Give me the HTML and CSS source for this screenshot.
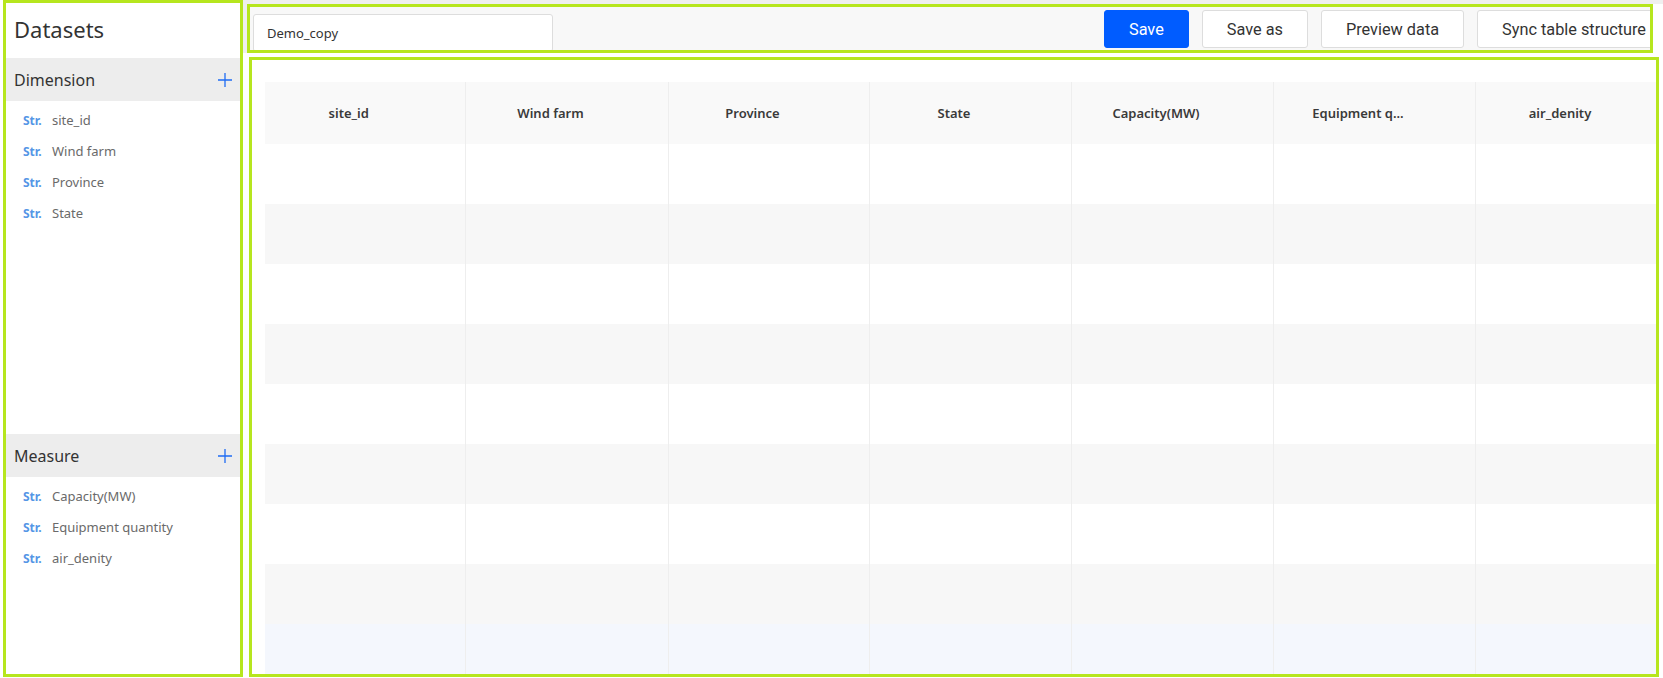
FILE: index.html
```html
<!DOCTYPE html>
<html lang="en">
<head>
<meta charset="utf-8">
<title>Datasets</title>
<link rel="stylesheet" href="styles.css">
</head>
<body>
<div class="app">
  <aside class="sidebar">
    <h1 class="title">Datasets</h1>
    <section class="group group-dim">
      <div class="group-head">
        <span>Dimension</span>
        <svg class="plus" width="14" height="14" viewBox="0 0 14 14"><path d="M7 0V14M0 7H14" stroke="#1f6cf3" stroke-width="1.3" fill="none"/></svg>
      </div>
      <ul class="fields">
        <li><span class="type">Str.</span>site_id</li>
        <li><span class="type">Str.</span>Wind farm</li>
        <li><span class="type">Str.</span>Province</li>
        <li><span class="type">Str.</span>State</li>
      </ul>
    </section>
    <section class="group">
      <div class="group-head">
        <span>Measure</span>
        <svg class="plus" width="14" height="14" viewBox="0 0 14 14"><path d="M7 0V14M0 7H14" stroke="#1f6cf3" stroke-width="1.3" fill="none"/></svg>
      </div>
      <ul class="fields">
        <li><span class="type">Str.</span>Capacity(MW)</li>
        <li><span class="type">Str.</span>Equipment quantity</li>
        <li><span class="type">Str.</span>air_denity</li>
      </ul>
    </section>
  </aside>
  <main class="main">
    <div class="topbar">
      <div class="toolbar">
        <input class="name-input" type="text" value="Demo_copy">
        <div class="actions">
          <button class="btn btn-primary">Save</button>
          <button class="btn">Save as</button>
          <button class="btn">Preview data</button>
          <button class="btn">Sync table structure</button>
        </div>
      </div>
    </div>
    <div class="grid-panel">
      <table class="grid">
        <colgroup>
          <col class="c1"><col class="c2"><col class="c3"><col class="c4"><col class="c5"><col class="c6"><col class="c7">
        </colgroup>
        <thead>
          <tr>
            <th>site_id</th><th>Wind farm</th><th>Province</th><th>State</th><th>Capacity(MW)</th><th>Equipment q...</th><th>air_denity</th>
          </tr>
        </thead>
        <tbody>
          <tr><td></td><td></td><td></td><td></td><td></td><td></td><td></td></tr>
          <tr><td></td><td></td><td></td><td></td><td></td><td></td><td></td></tr>
          <tr><td></td><td></td><td></td><td></td><td></td><td></td><td></td></tr>
          <tr><td></td><td></td><td></td><td></td><td></td><td></td><td></td></tr>
          <tr><td></td><td></td><td></td><td></td><td></td><td></td><td></td></tr>
          <tr><td></td><td></td><td></td><td></td><td></td><td></td><td></td></tr>
          <tr><td></td><td></td><td></td><td></td><td></td><td></td><td></td></tr>
          <tr><td></td><td></td><td></td><td></td><td></td><td></td><td></td></tr>
          <tr class="hover"><td></td><td></td><td></td><td></td><td></td><td></td><td></td></tr>
        </tbody>
      </table>
    </div>
  </main>
</div>
</body>
</html>
```

FILE: styles.css
```css
* { box-sizing: border-box; }
html, body { margin: 0; padding: 0; background: #ffffff; }
body { font-family: "Noto Sans", "Open Sans", sans-serif; color: #333; }

.app {
  display: flex;
  height: 678px;
  overflow: hidden;
}

/* Sidebar */
.sidebar {
  flex: 0 0 240px;
  width: 240px;
  height: 677px;
  margin-left: 3px;
  border: 3px solid #b6e61e;
  background: #fff;
  display: flex;
  flex-direction: column;
}
.title {
  margin: 0;
  height: 55px;
  padding: 0 8px;
  line-height: 52px;
  font-size: 22px;
  font-weight: 400;
  color: #333;
}
.group-dim { height: 376px; flex: 0 0 376px; }
.group-head {
  height: 43px;
  background: #ededed;
  padding: 0 8px;
  display: flex;
  align-items: center;
  justify-content: space-between;
  font-size: 16px;
  color: #333;
}
.plus { display: block; }
.fields {
  list-style: none;
  margin: 0;
  padding: 4px 0 0 17px;
}
.fields li {
  height: 31px;
  line-height: 31px;
  font-size: 13px;
  color: #6a6a6a;
  white-space: nowrap;
}
.type {
  display: inline-block;
  width: 29px;
  font-size: 12px;
  font-weight: 700;
  color: #5596e6;
}

/* Main */
.main {
  flex: 1;
  min-width: 0;
  display: flex;
  flex-direction: column;
}
.topbar {
  padding: 4px 10px 0 4px;
  background: linear-gradient(#efefef, #efefef) top / 100% 4px no-repeat,
              linear-gradient(#efefef, #efefef) left / 4px 53px no-repeat;
}
.toolbar {
  height: 49px;
  border: 3px solid #b6e61e;
  background: #f8f8f8;
  display: flex;
  align-items: flex-start;
  padding: 3px 0 0 3px;
  overflow: hidden;
}
.name-input {
  width: 300px;
  height: 38px;
  margin: 4px 0 0 0;
  border: 1px solid #dddddd;
  border-radius: 3px;
  background: #fff;
  padding: 0 13px;
  font-family: "Noto Sans", "Open Sans", sans-serif;
  font-size: 13px;
  color: #333;
  outline: none;
}
.actions {
  margin-left: auto;
  margin-right: -21px;
  display: flex;
  gap: 13px;
  flex-shrink: 0;
}
.btn {
  height: 38px;
  padding: 0 24px;
  border: 1px solid #dddddd;
  border-radius: 3px;
  background: #fff;
  font-family: Roboto, "Noto Sans", sans-serif;
  font-size: 16.3px;
  color: #333;
  white-space: nowrap;
  cursor: pointer;
}
.btn-primary {
  background: #005cff;
  border-color: #005cff;
  color: #fff;
}

.grid-panel {
  margin: 4px 4px 0 6px;
  height: 620px;
  border: 3px solid #b6e61e;
  padding: 22px 0 0 13px;
  overflow: hidden;
}
.grid {
  border-collapse: collapse;
  table-layout: fixed;
  width: 1412px;
}
.c1 { width: 200px; }
.c2 { width: 203px; }
.c3 { width: 201px; }
.c4, .c5, .c6, .c7 { width: 202px; }
.grid th {
  height: 62px;
  padding: 0 32px 0 0;
  background: #f9f9f9;
  font-size: 13px;
  font-weight: 600;
  color: #3a3a3a;
  text-align: center;
  border-right: 1px solid #eeeeee;
  white-space: nowrap;
}
.grid td {
  height: 60px;
  padding: 0;
  border-right: 1px solid #eeeeee;
}
.grid tbody tr:nth-child(even) { background: #f7f7f7; }
.grid tbody tr.hover { background: #f4f7fd; }
```
